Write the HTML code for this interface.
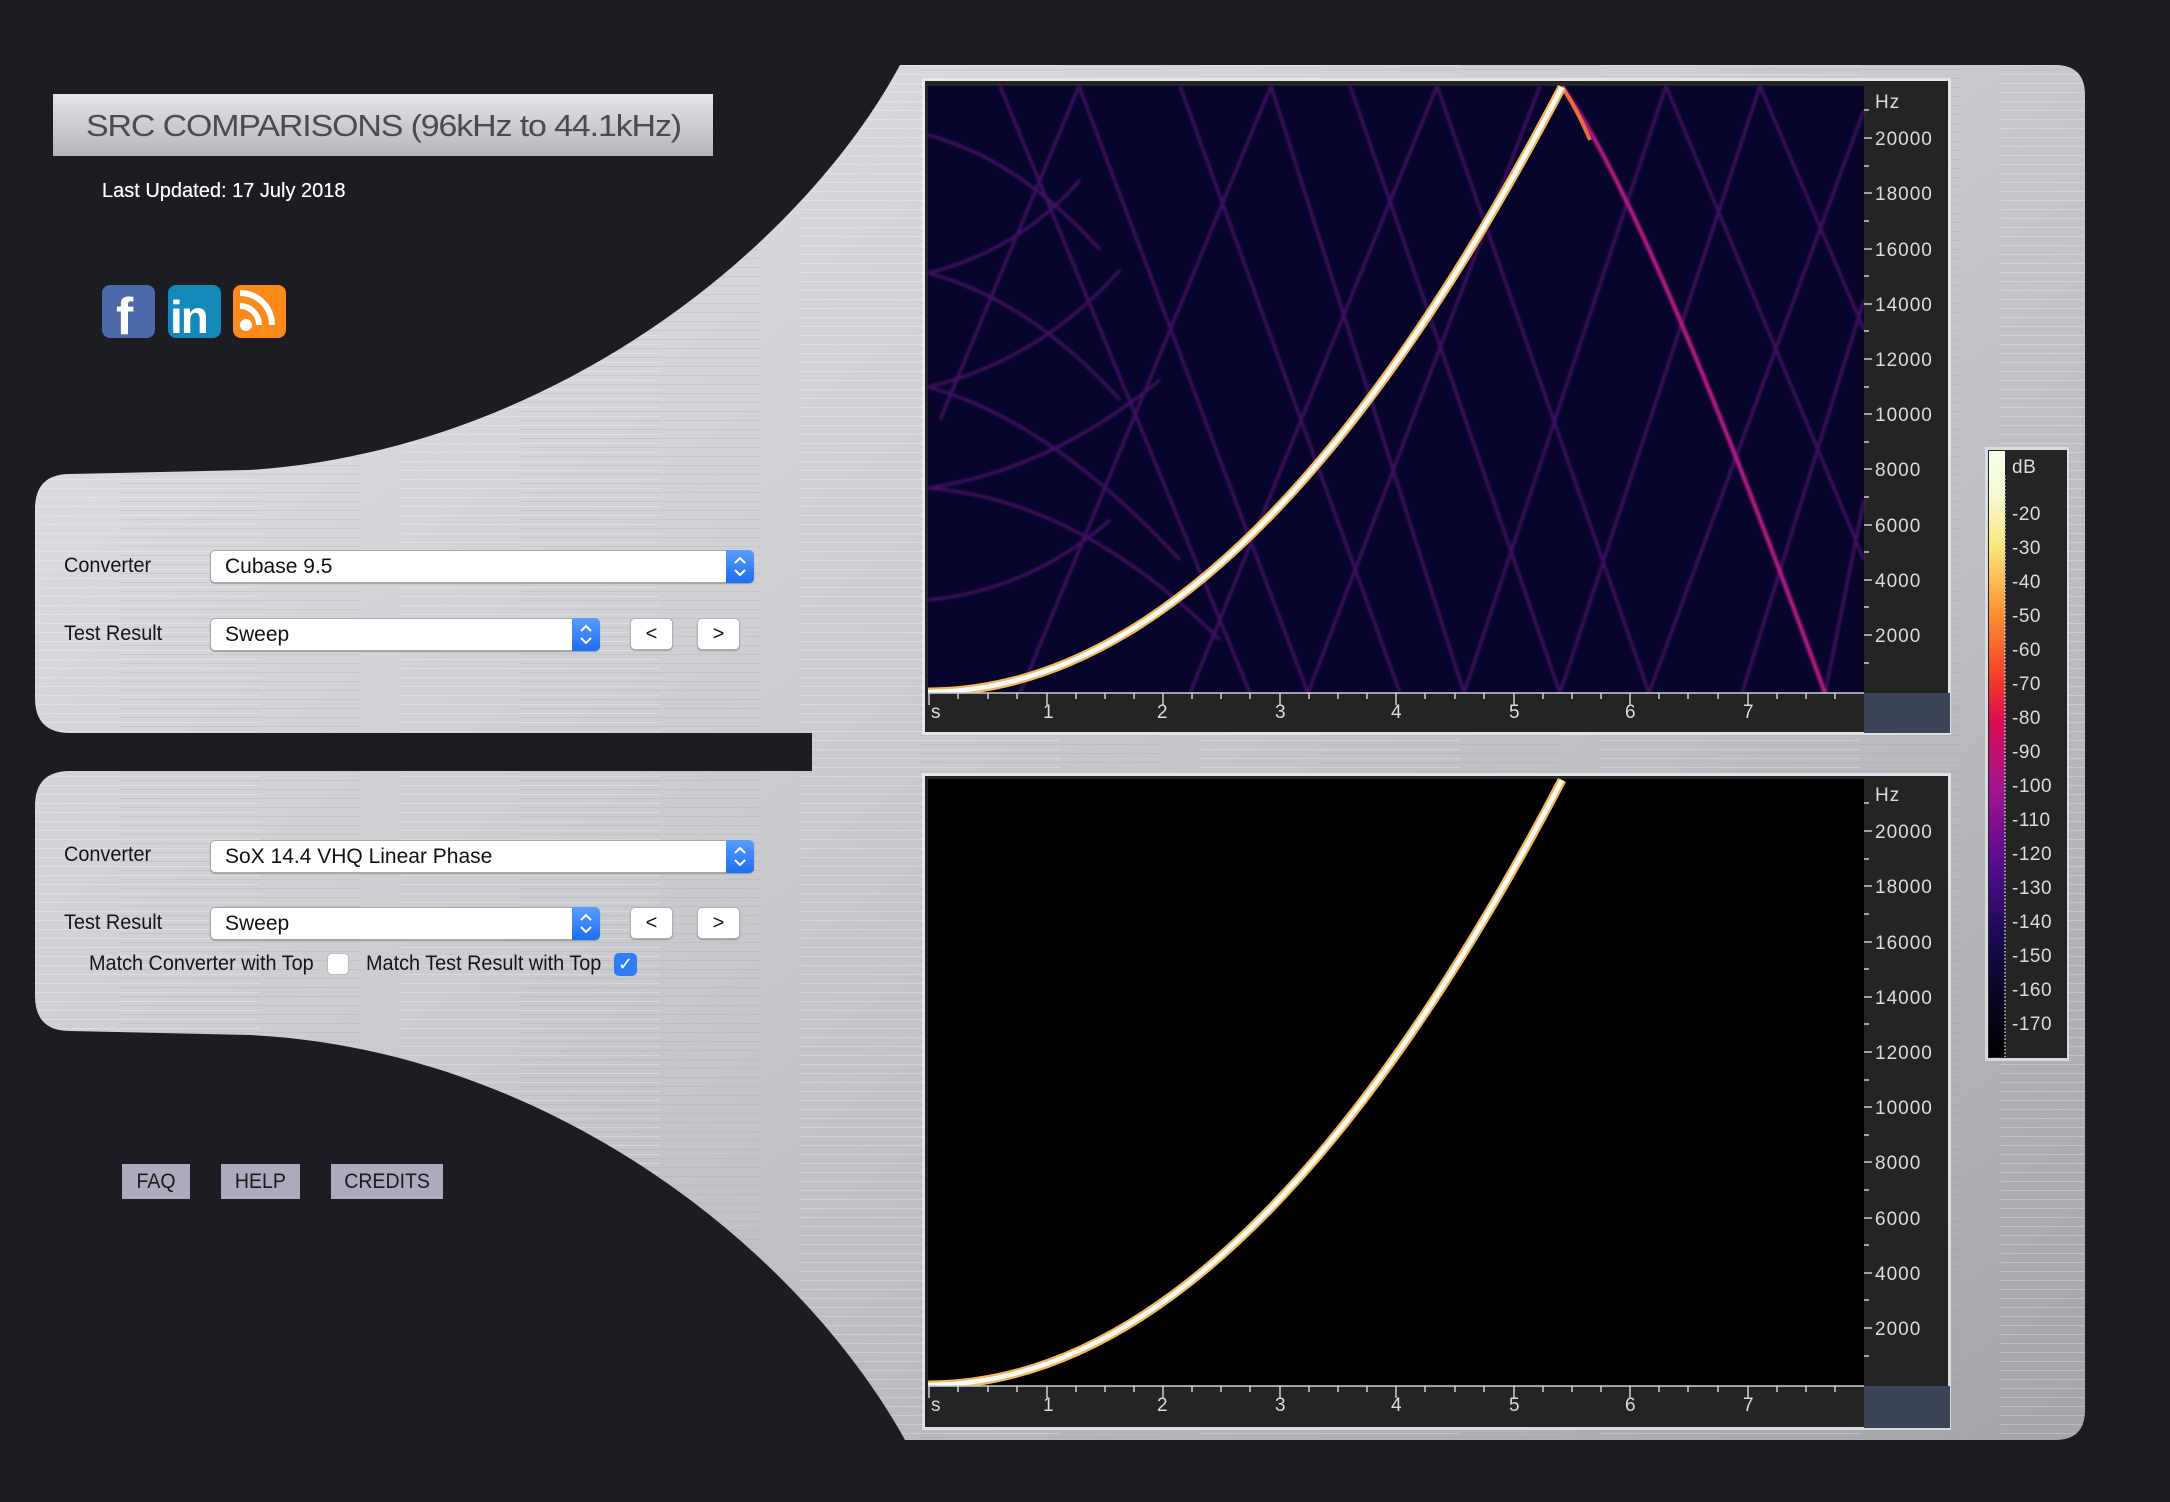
<!DOCTYPE html>
<html><head><meta charset="utf-8">
<style>
html,body{margin:0;padding:0;background:#1c1d22;width:2170px;height:1502px;overflow:hidden;font-family:"Liberation Sans",sans-serif}
.abs{position:absolute}
.lbl{position:absolute;font-family:"Liberation Sans",sans-serif;font-size:21px;color:#151515;transform:scaleX(0.945);transform-origin:0 0;white-space:nowrap}
.sel{position:absolute;background:#fff;border:1px solid #a8a8a8;border-radius:5px;box-sizing:border-box;font-size:21px;color:#111;padding-left:14px;line-height:31px;box-shadow:0 1px 1px rgba(0,0,0,.25)}
.step{position:absolute;right:-1px;top:-1px;bottom:-1px;width:28px;border-radius:0 5px 5px 0;background:linear-gradient(#5a9cff,#1c6ef2)}
.btn{position:absolute;background:#fff;border:1px solid #b0b0b0;border-radius:5px;box-sizing:border-box;width:43px;height:32px;text-align:center;font-size:20px;line-height:30px;color:#111;box-shadow:0 1px 1px rgba(0,0,0,.25)}
.nav{position:absolute;background:#abaabf;color:#1a1a1a;font-size:21px;text-align:center;line-height:35px;height:35px;top:1164px}
.nav span{display:inline-block;transform:scaleX(0.93)}
</style></head><body>
<svg class="abs" style="left:0;top:0" width="2170" height="1502" viewBox="0 0 2170 1502">
<defs>
<linearGradient id="sil" x1="0" y1="0" x2="1" y2="1">
<stop offset="0" stop-color="#e2e4e7"/><stop offset="0.45" stop-color="#c9cbcf"/><stop offset="0.8" stop-color="#b2b4b9"/><stop offset="1" stop-color="#a3a5ab"/>
</linearGradient>
<pattern id="streak" width="400" height="9" patternUnits="userSpaceOnUse">
<rect x="0" y="2" width="260" height="1" fill="#fff" opacity="0.25"/><rect x="120" y="6" width="240" height="1" fill="#888" opacity="0.15"/>
</pattern>
<linearGradient id="title" x1="0" y1="0" x2="0" y2="1"><stop offset="0" stop-color="#e4e5e7"/><stop offset="1" stop-color="#b3b5b9"/></linearGradient>
<linearGradient id="cb" x1="0" y1="0" x2="0" y2="1">
<stop offset="0" stop-color="#f6ffe9"/><stop offset="0.07" stop-color="#f4fbd6"/><stop offset="0.16" stop-color="#fbe57a"/><stop offset="0.27" stop-color="#fb8f33"/><stop offset="0.38" stop-color="#f0392c"/><stop offset="0.45" stop-color="#d40e55"/><stop offset="0.56" stop-color="#a0158d"/><stop offset="0.68" stop-color="#560d8e"/><stop offset="0.8" stop-color="#1a0a52"/><stop offset="0.9" stop-color="#080522"/><stop offset="1" stop-color="#000"/>
</linearGradient>
<filter id="blur"><feGaussianBlur stdDeviation="1.2"/></filter>
</defs>
<path d="M930 65 L2055 65 Q2085 65 2085 95 L2085 1410 Q2085 1440 2055 1440 L905 1440 C800 1250 550 1050 250 1035 L70 1031 Q35 1031 35 996 L35 806 Q35 771 70 771 L812 771 L812 733 L70 733 Q35 733 35 698 L35 509 Q35 474 70 474 L250 470 C550 450 800 250 900 65 Z" fill="url(#sil)"/>
<path d="M930 65 L2055 65 Q2085 65 2085 95 L2085 1410 Q2085 1440 2055 1440 L905 1440 C800 1250 550 1050 250 1035 L70 1031 Q35 1031 35 996 L35 806 Q35 771 70 771 L812 771 L812 733 L70 733 Q35 733 35 698 L35 509 Q35 474 70 474 L250 470 C550 450 800 250 900 65 Z" fill="url(#streak)"/>
<rect x="53" y="94" width="660" height="62" fill="url(#title)"/>
<text x="86" y="136" font-family="Liberation Sans" font-size="31" fill="#4a4b50" letter-spacing="-1" textLength="595" lengthAdjust="spacingAndGlyphs">SRC COMPARISONS (96kHz to 44.1kHz)</text>

<rect x="922" y="78" width="1029" height="657" fill="#f0f2f4" opacity="0.7"/>
<rect x="925" y="81" width="1023" height="651" fill="#242424"/>
<rect x="928" y="86" width="936" height="607" fill="#08052c"/>
<g stroke="#8a22a8" stroke-width="3" opacity="0.45" fill="none" filter="url(#blur)">
<line x1="1000" y1="86" x2="1250" y2="693"/><line x1="1079" y1="86" x2="1308" y2="693"/><line x1="1180" y1="86" x2="1400" y2="693"/><line x1="1271" y1="86" x2="1464" y2="693"/><line x1="1350" y1="86" x2="1560" y2="693"/><line x1="1437" y1="86" x2="1649" y2="693"/><line x1="1666" y1="86" x2="1864" y2="560"/><line x1="1760" y1="86" x2="1864" y2="330"/>
<line x1="1079" y1="86" x2="940" y2="420"/><line x1="1271" y1="86" x2="1020" y2="693"/><line x1="1437" y1="86" x2="1190" y2="693"/><line x1="1540" y1="86" x2="1308" y2="693"/><line x1="1666" y1="86" x2="1464" y2="693"/><line x1="1760" y1="86" x2="1560" y2="693"/><line x1="1864" y1="110" x2="1649" y2="693"/><line x1="1864" y1="300" x2="1742" y2="693"/><line x1="1864" y1="500" x2="1825" y2="693"/>
<path d="M928 488 Q1080 500 1220 640"/><path d="M928 488 Q1050 470 1160 380"/><path d="M928 387 Q1050 420 1180 560"/><path d="M928 387 Q1040 360 1120 270"/><path d="M928 273 Q1030 300 1120 400"/><path d="M928 273 Q1020 250 1080 180"/><path d="M928 135 Q1020 160 1100 250"/><path d="M928 600 Q1030 590 1110 520"/>
</g>
<path d="M1562 87 Q1645 200 1825 693" stroke="#c01f8c" stroke-width="4" fill="none" filter="url(#blur)"/>
<path d="M1562 87 Q1575 105 1590 140" stroke="#f06a40" stroke-width="4" fill="none"/>
<path d="M928 692 Q1245 692 1562 87" stroke="#f4b858" stroke-width="9" fill="none"/>
<path d="M928 692 Q1245 692 1562 87" stroke="#ffffff" stroke-width="4.5" fill="none"/>
<rect x="928" y="693" width="936" height="36" fill="#242424"/>
<rect x="1864" y="693" width="86" height="40" fill="#3c4558"/>

<rect x="922" y="773" width="1029" height="657" fill="#f0f2f4" opacity="0.7"/>
<rect x="925" y="776" width="1023" height="651" fill="#242424"/>
<rect x="928" y="779" width="936" height="607" fill="#000"/>
<path d="M928 1385 Q1245 1385 1562 780" stroke="#f4b858" stroke-width="9" fill="none"/>
<path d="M928 1385 Q1245 1385 1562 780" stroke="#ffffff" stroke-width="4.5" fill="none"/>
<rect x="928" y="1386" width="936" height="36" fill="#242424"/>
<rect x="1864" y="1386" width="86" height="42" fill="#3c4558"/>

<g font-family="Liberation Sans" font-size="19" fill="#dcdcdc" letter-spacing="1">
<text x="1875" y="108">Hz</text>
<text x="1875" y="145">20000</text><text x="1875" y="200">18000</text><text x="1875" y="256">16000</text><text x="1875" y="311">14000</text><text x="1875" y="366">12000</text><text x="1875" y="421">10000</text><text x="1875" y="476">8000</text><text x="1875" y="532">6000</text><text x="1875" y="587">4000</text><text x="1875" y="642">2000</text>
<text x="1875" y="801">Hz</text>
<text x="1875" y="838">20000</text><text x="1875" y="893">18000</text><text x="1875" y="949">16000</text><text x="1875" y="1004">14000</text><text x="1875" y="1059">12000</text><text x="1875" y="1114">10000</text><text x="1875" y="1169">8000</text><text x="1875" y="1225">6000</text><text x="1875" y="1280">4000</text><text x="1875" y="1335">2000</text>
<text x="931" y="718">s</text><text x="1043" y="718">1</text><text x="1157" y="718">2</text><text x="1275" y="718">3</text><text x="1391" y="718">4</text><text x="1509" y="718">5</text><text x="1625" y="718">6</text><text x="1743" y="718">7</text>
<text x="931" y="1411">s</text><text x="1043" y="1411">1</text><text x="1157" y="1411">2</text><text x="1275" y="1411">3</text><text x="1391" y="1411">4</text><text x="1509" y="1411">5</text><text x="1625" y="1411">6</text><text x="1743" y="1411">7</text>
</g>
<g stroke="#cfcfcf" stroke-width="1.5">
<path d="M1864 138h8M1864 193h8M1864 249h8M1864 304h8M1864 359h8M1864 414h8M1864 469h8M1864 525h8M1864 580h8M1864 635h8M1864 166h5M1864 221h5M1864 276h5M1864 331h5M1864 387h5M1864 442h5M1864 497h5M1864 552h5M1864 607h5M1864 663h5M1864 110h5"/>
<path d="M1864 831h8M1864 886h8M1864 942h8M1864 997h8M1864 1052h8M1864 1107h8M1864 1162h8M1864 1218h8M1864 1273h8M1864 1328h8M1864 859h5M1864 914h5M1864 969h5M1864 1024h5M1864 1080h5M1864 1135h5M1864 1190h5M1864 1245h5M1864 1300h5M1864 1356h5M1864 803h5"/>
<path d="M928 693h936M928 1386h936"/>
<path d="M929 693v12M1047 693v12M1163 693v12M1280 693v12M1396 693v12M1514 693v12M1630 693v12M1748 693v12M958 693v6M988 693v6M1017 693v6M1076 693v6M1105 693v6M1134 693v6M1192 693v6M1221 693v6M1250 693v6M1309 693v6M1338 693v6M1367 693v6M1425 693v6M1455 693v6M1484 693v6M1543 693v6M1572 693v6M1601 693v6M1659 693v6M1688 693v6M1718 693v6M1777 693v6M1806 693v6M1835 693v6"/>
<path d="M929 1386v12M1047 1386v12M1163 1386v12M1280 1386v12M1396 1386v12M1514 1386v12M1630 1386v12M1748 1386v12M958 1386v6M988 1386v6M1017 1386v6M1076 1386v6M1105 1386v6M1134 1386v6M1192 1386v6M1221 1386v6M1250 1386v6M1309 1386v6M1338 1386v6M1367 1386v6M1425 1386v6M1455 1386v6M1484 1386v6M1543 1386v6M1572 1386v6M1601 1386v6M1659 1386v6M1688 1386v6M1718 1386v6M1777 1386v6M1806 1386v6M1835 1386v6"/>
</g>

<rect x="1985" y="447" width="84" height="614" fill="#eef0f2" opacity="0.6"/>
<rect x="1988" y="450" width="79" height="608" fill="#242424"/>
<rect x="1989" y="451" width="16" height="606" fill="url(#cb)"/>
<line x1="2005" y1="475" x2="2005" y2="1057" stroke="#ccc" stroke-width="1.5" stroke-dasharray="1.5 2"/>
<g font-family="Liberation Sans" font-size="19" fill="#dcdcdc" letter-spacing="0.5">
<text x="2012" y="473">dB</text>
<text x="2012" y="520">-20</text><text x="2012" y="554">-30</text><text x="2012" y="588">-40</text><text x="2012" y="622">-50</text><text x="2012" y="656">-60</text><text x="2012" y="690">-70</text><text x="2012" y="724">-80</text><text x="2012" y="758">-90</text><text x="2012" y="792">-100</text><text x="2012" y="826">-110</text><text x="2012" y="860">-120</text><text x="2012" y="894">-130</text><text x="2012" y="928">-140</text><text x="2012" y="962">-150</text><text x="2012" y="996">-160</text><text x="2012" y="1030">-170</text>
</g>

<rect x="102" y="285" width="53" height="53" rx="8" fill="#4a6aa8"/>
<text x="116" y="334" font-family="Liberation Sans" font-weight="bold" font-size="52" fill="#fff">f</text>
<rect x="168" y="285" width="53" height="53" rx="8" fill="#1488b8"/>
<text x="170" y="333" font-family="Liberation Sans" font-weight="bold" font-size="46" fill="#fff" letter-spacing="-2">in</text>
<rect x="233" y="285" width="53" height="53" rx="8" fill="#fb8a1a"/>
<circle cx="246" cy="325" r="6" fill="#fff"/>
<path d="M240 306 A19 19 0 0 1 259 325" stroke="#fff" stroke-width="6" fill="none"/>
<path d="M240 293 A32 32 0 0 1 272 325" stroke="#fff" stroke-width="6" fill="none"/>
</svg>

<div class="abs" style="left:102px;top:180px;font-size:20px;color:#fff;white-space:nowrap;text-shadow:0 0 0.5px #fff">Last Updated: 17 July 2018</div>

<div class="lbl" style="left:64px;top:554px">Converter</div>
<div class="sel" style="left:210px;top:550px;width:544px;height:33px">Cubase 9.5<div class="step"></div></div>
<div class="lbl" style="left:64px;top:622px">Test Result</div>
<div class="sel" style="left:210px;top:618px;width:390px;height:33px">Sweep<div class="step"></div></div>
<div class="btn" style="left:630px;top:618px">&lt;</div>
<div class="btn" style="left:697px;top:618px">&gt;</div>

<div class="lbl" style="left:64px;top:843px">Converter</div>
<div class="sel" style="left:210px;top:840px;width:544px;height:33px">SoX 14.4 VHQ Linear Phase<div class="step"></div></div>
<div class="lbl" style="left:64px;top:911px">Test Result</div>
<div class="sel" style="left:210px;top:907px;width:390px;height:33px">Sweep<div class="step"></div></div>
<div class="btn" style="left:630px;top:907px">&lt;</div>
<div class="btn" style="left:697px;top:907px">&gt;</div>
<div class="lbl" style="left:89px;top:952px">Match Converter with Top</div>
<div class="abs" style="left:327px;top:953px;width:22px;height:22px;background:#fff;border-radius:5px;border:1px solid #bbb;box-sizing:border-box"></div>
<div class="lbl" style="left:366px;top:952px">Match Test Result with Top</div>
<div class="abs" style="left:614px;top:953px;width:23px;height:23px;background:#2f7cf6;border-radius:5px;color:#fff;font-size:18px;text-align:center;line-height:23px">✓</div>

<div class="nav" style="left:122px;width:68px"><span>FAQ</span></div>
<div class="nav" style="left:221px;width:79px"><span>HELP</span></div>
<div class="nav" style="left:331px;width:112px"><span>CREDITS</span></div>

<svg class="abs" style="left:0;top:0;pointer-events:none" width="2170" height="1502">
<g stroke="#fff" stroke-width="2" fill="none">
<path d="M735 563 l5 -5 l5 5 M735 570 l5 5 l5 -5"/><path d="M735 853 l5 -5 l5 5 M735 860 l5 5 l5 -5"/>
<path d="M581 631 l5 -5 l5 5 M581 638 l5 5 l5 -5"/><path d="M581 920 l5 -5 l5 5 M581 927 l5 5 l5 -5"/>
</g>
</svg>
</body></html>
